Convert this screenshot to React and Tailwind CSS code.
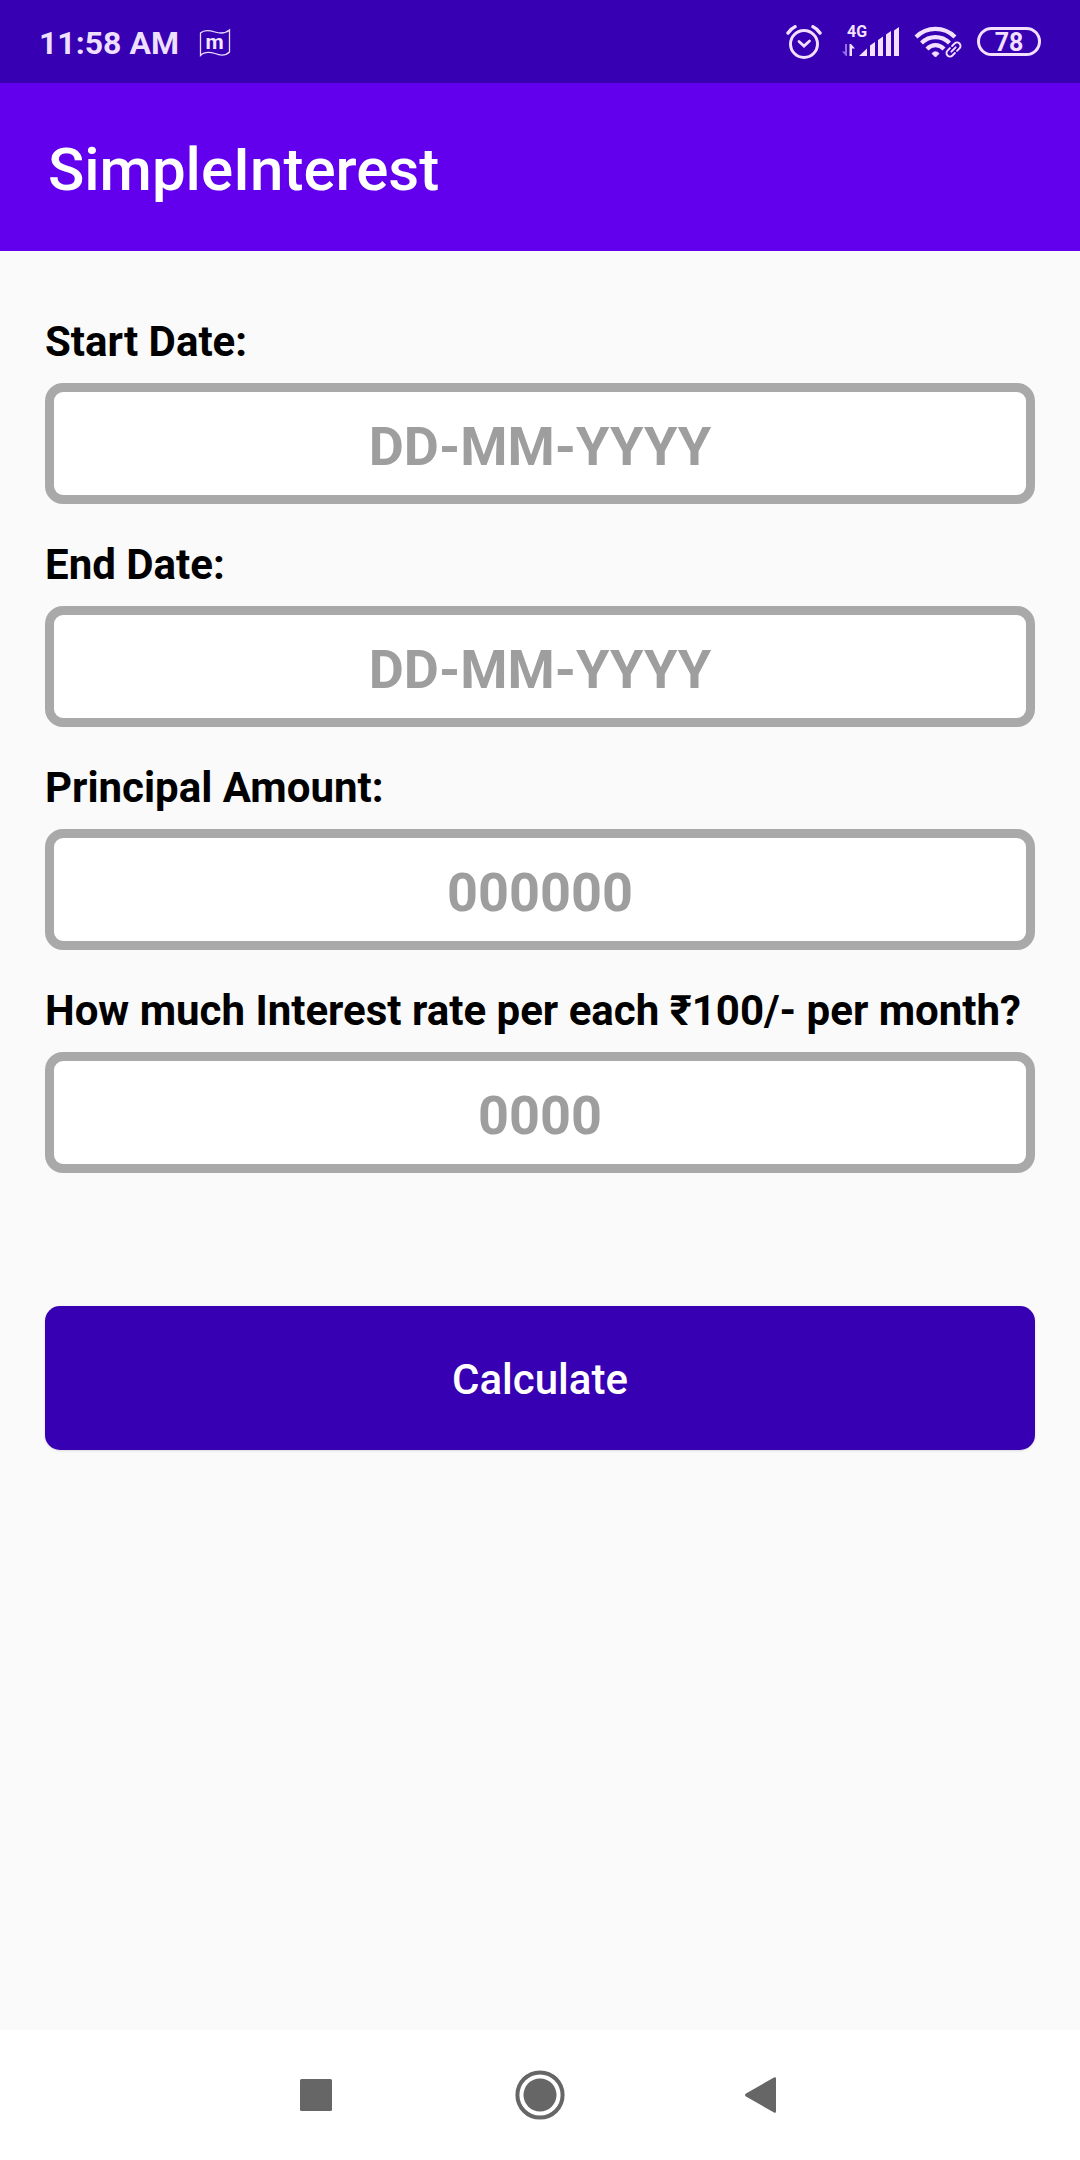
import React, { useState } from "react";

const fields = [
  { id: "startDate", label: "Start Date:", hint: "DD-MM-YYYY" },
  { id: "endDate", label: "End Date:", hint: "DD-MM-YYYY" },
  { id: "principal", label: "Principal Amount:", hint: "000000" },
  { id: "rate", label: "How much Interest rate per each ₹100/- per month?", hint: "0000" },
];

function FlagIcon() {
  return (
    <svg width="32" height="34" viewBox="0 0 32 34" fill="none">
      <path
        d="M1.5 8 C5 4.5 11 5.5 16 7 C21 8.5 27 8 30.5 5 V27 C27 30.5 21 30.5 16 28.5 C11 27 5 27 1.5 30.5 Z"
        stroke="#eaddff"
        strokeWidth="1.3"
      />
      <text x="15.5" y="23.5" textAnchor="middle" fontSize="21" fontWeight="700" fill="#f3e8ff">
        m
      </text>
    </svg>
  );
}

function AlarmIcon() {
  return (
    <svg width="40" height="34" viewBox="0 0 40 34" fill="none" stroke="#f3e0ff" strokeWidth="3" strokeLinecap="round">
      <circle cx="22" cy="19" r="13.5" />
      <path d="M17 16.5 L22 21 L27.5 16" strokeWidth="2.8" />
      <path d="M6 8 C8 5 10 3 13 1.7" strokeWidth="3.4" />
      <path d="M31 1.7 C34 3 36 5 38 8" strokeWidth="3.4" />
    </svg>
  );
}

function SignalIcon() {
  return (
    <svg width="58" height="42" viewBox="0 -4 58 42" fill="#f3e0ff">
      <text x="5" y="11.5" fontSize="16" fontWeight="700">
        4G
      </text>
      <path d="M3 19 H5 V31 H4 L0 26.5 H3 Z" fill="#9670ea" />
      <path d="M7.5 19 H9 L13 23.5 H10 V31 H7.5 Z" />
      <path d="M17 31 L25 23.5 V31 Z" />
      <path d="M28 20.5 L33 17 V31 H28 Z" />
      <path d="M36 15 L41 11.5 V31 H36 Z" />
      <path d="M44 9.5 L49 6 V31 H44 Z" />
      <path d="M52 5.5 L57 2 V31 H52 Z" />
    </svg>
  );
}

function WifiIcon() {
  return (
    <svg width="48" height="34" viewBox="0 0 48 34" fill="none" stroke="#f3e0ff">
      <path d="M2 12 C13 1.2 30 1.2 41 12" strokeWidth="4.2" />
      <path d="M7.5 18 C15.5 10.2 27.5 10.2 35.5 18" strokeWidth="4.2" />
      <path d="M13 24 C18 18.8 25 18.8 30 24" strokeWidth="4.2" />
      <path d="M18 28.5 A4.5 4.5 0 0 1 25 28.5 L21.5 32 Z" fill="#f3e0ff" />
      <g transform="rotate(-45 39.5 24.5)" strokeWidth="1.9" strokeLinecap="round">
        <path d="M38 21 H34.5 A3.5 3.5 0 0 0 34.5 28 H38" />
        <path d="M41 21 H44.5 A3.5 3.5 0 0 1 44.5 28 H41" />
        <path d="M36.5 24.5 H42.5" />
      </g>
    </svg>
  );
}

function BatteryIcon() {
  return (
    <svg width="66" height="34" viewBox="0 0 66 34" fill="none">
      <rect x="2.5" y="3.5" width="61" height="26" rx="13" stroke="#f3e0ff" strokeWidth="3" />
      <text x="33" y="25.5" textAnchor="middle" fontSize="25" fontWeight="700" fill="#f3e0ff">
        78
      </text>
    </svg>
  );
}

function StatusBar() {
  return (
    <div className="flex h-[83px] items-center bg-[#3700b3] pl-[39px] pr-[38px]">
      <div className="pt-0.5 text-[32px] leading-9 font-bold text-[#eedfff]">11:58 AM</div>
      <div className="ml-5">
        <FlagIcon />
      </div>
      <div className="ml-auto flex items-center">
        <AlarmIcon />
        <div className="ml-5 mr-3.5">
          <SignalIcon />
        </div>
        <WifiIcon />
        <div className="ml-3.5">
          <BatteryIcon />
        </div>
      </div>
    </div>
  );
}

function NavBar() {
  return (
    <nav className="flex h-[130px] items-center justify-center gap-[174px] bg-white text-[#666666]">
      <button type="button" aria-label="Recents">
        <svg width="50" height="50" viewBox="0 0 50 50" fill="currentColor">
          <rect x="9" y="9" width="32" height="32" rx="1.5" />
        </svg>
      </button>
      <button type="button" aria-label="Home">
        <svg width="50" height="50" viewBox="0 0 50 50" fill="currentColor">
          <circle cx="25" cy="25" r="22.6" fill="none" stroke="currentColor" strokeWidth="4" />
          <circle cx="25" cy="25" r="16.5" />
        </svg>
      </button>
      <button type="button" aria-label="Back">
        <svg width="50" height="50" viewBox="0 0 50 50" fill="currentColor">
          <path d="M35 7.5 Q37 6.5 37 8.5 V41.5 Q37 43.5 35 42.5 L7 26.5 Q5 25 7 23.5 Z" />
        </svg>
      </button>
    </nav>
  );
}

function App() {
  const [values, setValues] = useState({ startDate: "", endDate: "", principal: "", rate: "" });

  const handleChange = (event) => {
    setValues({ ...values, [event.target.name]: event.target.value });
  };

  return (
    <div className="flex min-h-screen flex-col bg-[#fafafa] font-[Roboto,sans-serif]">
      <StatusBar />
      <header className="flex h-[168px] items-center bg-[#6200ee] px-12 pt-1.5">
        <h1 className="text-[60px] leading-[70px] font-medium text-white">SimpleInterest</h1>
      </header>
      <form
        className="flex flex-1 flex-col px-[45px] pt-[67px]"
        onSubmit={(event) => event.preventDefault()}
      >
        <div className="flex flex-col gap-[37px]">
          {fields.map((field) => (
            <div key={field.id} className="flex flex-col gap-[17px]">
              <label htmlFor={field.id} className="text-[42px] leading-[48px] font-bold text-black">
                {field.label}
              </label>
              <input
                id={field.id}
                name={field.id}
                type="text"
                placeholder={field.hint}
                value={values[field.id]}
                onChange={handleChange}
                className="h-[121px] w-full rounded-[18px] border-[9px] border-[#a9a9a9] bg-white pt-1.5 text-center text-[54px] font-bold text-black placeholder:text-[#9e9e9e]"
              />
            </div>
          ))}
        </div>
        <button
          type="submit"
          className="mt-[133px] h-36 w-full rounded-[15px] bg-[#3700b3] pt-0.5 text-[42px] font-medium text-white shadow-sm"
        >
          Calculate
        </button>
      </form>
      <NavBar />
    </div>
  );
}

export default App;
